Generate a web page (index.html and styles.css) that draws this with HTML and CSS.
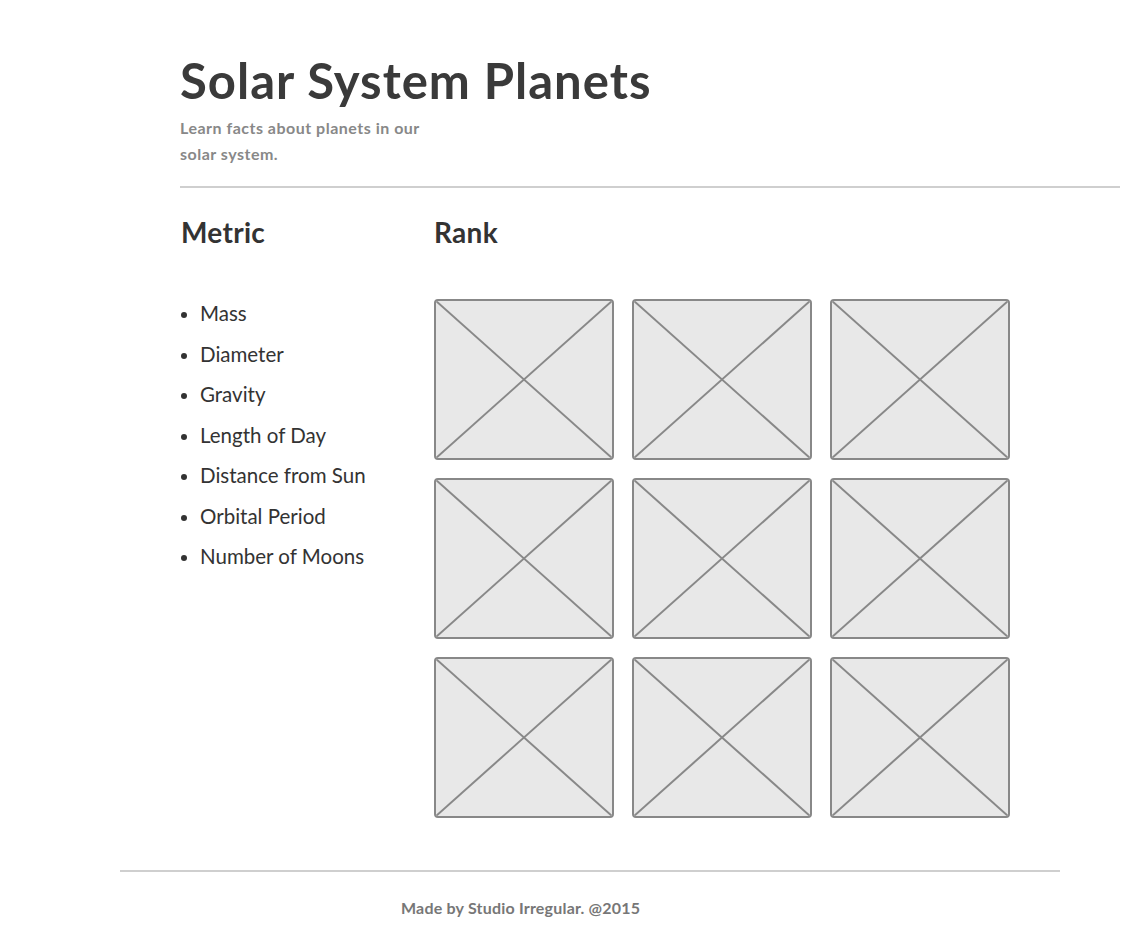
FILE: index.html
```html
<!DOCTYPE html>
<html>
<head>
<meta charset="utf-8">
<link rel="stylesheet" href="styles.css">
</head>
<body>
<header class="header">
  <h1 class="title">Solar System Planets</h1>
  <p class="subtitle">Learn facts about planets in our solar system.</p>
</header>
<hr class="rule rule-top">
<main class="content">
  <section class="metrics">
    <h2 class="section-title">Metric</h2>
    <ul class="metric-list">
      <li>Mass</li>
      <li>Diameter</li>
      <li>Gravity</li>
      <li>Length of Day</li>
      <li>Distance from Sun</li>
      <li>Orbital Period</li>
      <li>Number of Moons</li>
    </ul>
  </section>
  <section class="rank">
    <h2 class="section-title">Rank</h2>
    <div class="grid">
      <div class="ph"><svg viewBox="0 0 100 100" preserveAspectRatio="none"><line x1="0" y1="0" x2="100" y2="100"/><line x1="100" y1="0" x2="0" y2="100"/></svg></div>
      <div class="ph"><svg viewBox="0 0 100 100" preserveAspectRatio="none"><line x1="0" y1="0" x2="100" y2="100"/><line x1="100" y1="0" x2="0" y2="100"/></svg></div>
      <div class="ph"><svg viewBox="0 0 100 100" preserveAspectRatio="none"><line x1="0" y1="0" x2="100" y2="100"/><line x1="100" y1="0" x2="0" y2="100"/></svg></div>
      <div class="ph"><svg viewBox="0 0 100 100" preserveAspectRatio="none"><line x1="0" y1="0" x2="100" y2="100"/><line x1="100" y1="0" x2="0" y2="100"/></svg></div>
      <div class="ph"><svg viewBox="0 0 100 100" preserveAspectRatio="none"><line x1="0" y1="0" x2="100" y2="100"/><line x1="100" y1="0" x2="0" y2="100"/></svg></div>
      <div class="ph"><svg viewBox="0 0 100 100" preserveAspectRatio="none"><line x1="0" y1="0" x2="100" y2="100"/><line x1="100" y1="0" x2="0" y2="100"/></svg></div>
      <div class="ph"><svg viewBox="0 0 100 100" preserveAspectRatio="none"><line x1="0" y1="0" x2="100" y2="100"/><line x1="100" y1="0" x2="0" y2="100"/></svg></div>
      <div class="ph"><svg viewBox="0 0 100 100" preserveAspectRatio="none"><line x1="0" y1="0" x2="100" y2="100"/><line x1="100" y1="0" x2="0" y2="100"/></svg></div>
      <div class="ph"><svg viewBox="0 0 100 100" preserveAspectRatio="none"><line x1="0" y1="0" x2="100" y2="100"/><line x1="100" y1="0" x2="0" y2="100"/></svg></div>
    </div>
  </section>
</main>
<footer class="footer">
  <hr class="rule rule-bottom">
  <p class="credit">Made by Studio Irregular. @2015</p>
</footer>
</body>
</html>
```
FILE: styles.css
```css
* { box-sizing: border-box; }
html, body { margin: 0; padding: 0; background: #fff; }
body {
  font-family: Lato, "Open Sans", "Liberation Sans", sans-serif;
  color: #333;
}
.header {
  padding: 51px 0 0 180px;
}
.title {
  margin: 0;
  font-size: 49px;
  line-height: 58px;
  font-weight: 700;
  color: #3a3a3a;
  letter-spacing: 1px;
}
.subtitle {
  margin: 6px 0 0 0;
  width: 248px;
  font-size: 16px;
  line-height: 26px;
  font-weight: 700;
  color: #888;
  letter-spacing: 0.5px;
}
.rule {
  border: 0;
  height: 2px;
  background: #cfcfcf;
  margin: 0;
}
.rule-top {
  margin: 19px 20px 0 180px;
}
.content {
  display: flex;
  padding-left: 181px;
  padding-top: 26px;
}
.metrics {
  width: 253px;
}
.section-title {
  margin: 0;
  font-size: 28px;
  line-height: 36px;
  font-weight: 700;
  color: #333;
  letter-spacing: 0.3px;
}
.metric-list {
  margin: 43px 0 0 0;
  padding: 0 0 0 19px;
  font-size: 20.5px;
  line-height: 40.5px;
  color: #333;
}
.metric-list li::marker { font-size: 19px; }
.grid {
  margin-top: 49px;
  display: grid;
  grid-template-columns: repeat(3, 180px);
  grid-auto-rows: 161px;
  gap: 18px;
}
.ph {
  background: #e8e8e8;
  border: 2px solid #888;
  border-radius: 4px;
  overflow: hidden;
}
.ph svg {
  display: block;
  width: 100%;
  height: 100%;
}
.ph line {
  stroke: #888;
  stroke-width: 2;
  vector-effect: non-scaling-stroke;
}
.footer {
  padding-top: 52px;
}
.rule-bottom {
  margin: 0 0 0 120px;
  width: 940px;
}
.credit {
  margin: 26px 0 0 401px;
  font-size: 16px;
  font-weight: 700;
  color: #777;
  letter-spacing: 0.2px;
}
```
